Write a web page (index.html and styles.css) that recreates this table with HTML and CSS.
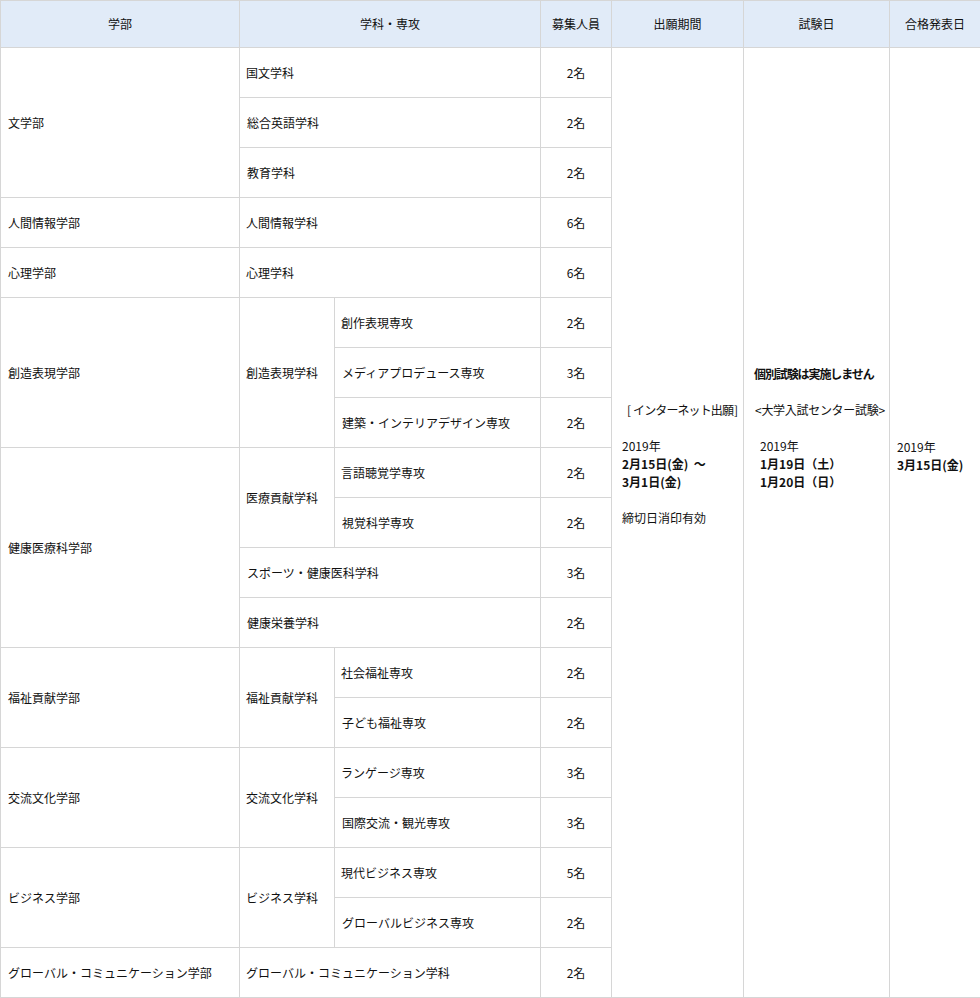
FILE: index.html
```html
<!DOCTYPE html>
<html lang="ja">
<head>
<meta charset="utf-8">
<link rel="stylesheet" href="styles.css">
</head>
<body>
<table class="tbl">
<colgroup>
<col class="c1"><col class="c2a"><col class="c2b"><col class="c3"><col class="c4"><col class="c5"><col class="c6">
</colgroup>
<thead>
<tr class="hr">
<th>学部</th>
<th colspan="2">学科・専攻</th>
<th>募集人員</th>
<th>出願期間</th>
<th>試験日</th>
<th>合格発表日</th>
</tr>
</thead>
<tbody>
<tr>
<td rowspan="3">文学部</td>
<td colspan="2">国文学科</td>
<td class="num">2名</td>
<td rowspan="19" class="span col4"><span class="brk">[<span class="gap">インターネット出願</span>]</span><br><br>2019年<br><b>2月15日(金)&nbsp;&nbsp;～<br>3月1日(金)</b><br><br>締切日消印有効</td>
<td rowspan="19" class="span col5"><b class="tight">個別試験は実施しません</b><br><br><span class="ang">&lt;大学入試センター試験&gt;</span><br><br><span class="ind">2019年<br><b>1月19日（土）<br>1月20日（日）</b></span></td>
<td rowspan="19" class="span col6">2019年<br><b>3月15日(金)</b></td>
</tr>
<tr><td colspan="2">総合英語学科</td><td class="num">2名</td></tr>
<tr><td colspan="2">教育学科</td><td class="num">2名</td></tr>
<tr><td>人間情報学部</td><td colspan="2">人間情報学科</td><td class="num">6名</td></tr>
<tr><td>心理学部</td><td colspan="2">心理学科</td><td class="num">6名</td></tr>
<tr><td rowspan="3">創造表現学部</td><td rowspan="3">創造表現学科</td><td>創作表現専攻</td><td class="num">2名</td></tr>
<tr><td>メディアプロデュース専攻</td><td class="num">3名</td></tr>
<tr><td>建築・インテリアデザイン専攻</td><td class="num">2名</td></tr>
<tr><td rowspan="4">健康医療科学部</td><td rowspan="2">医療貢献学科</td><td>言語聴覚学専攻</td><td class="num">2名</td></tr>
<tr><td>視覚科学専攻</td><td class="num">2名</td></tr>
<tr><td colspan="2">スポーツ・健康医科学科</td><td class="num">3名</td></tr>
<tr><td colspan="2">健康栄養学科</td><td class="num">2名</td></tr>
<tr><td rowspan="2">福祉貢献学部</td><td rowspan="2">福祉貢献学科</td><td>社会福祉専攻</td><td class="num">2名</td></tr>
<tr><td>子ども福祉専攻</td><td class="num">2名</td></tr>
<tr><td rowspan="2">交流文化学部</td><td rowspan="2">交流文化学科</td><td>ランゲージ専攻</td><td class="num">3名</td></tr>
<tr><td>国際交流・観光専攻</td><td class="num">3名</td></tr>
<tr><td rowspan="2">ビジネス学部</td><td rowspan="2">ビジネス学科</td><td>現代ビジネス専攻</td><td class="num">5名</td></tr>
<tr><td>グローバルビジネス専攻</td><td class="num">2名</td></tr>
<tr><td>グローバル・コミュニケーション学部</td><td colspan="2">グローバル・コミュニケーション学科</td><td class="num">2名</td></tr>
</tbody>
</table>
</body>
</html>
```
FILE: styles.css
```css
html, body {
  margin: 0;
  padding: 0;
  background: #fff;
}
body {
  font-family: "Noto Sans CJK JP", "Noto Sans", sans-serif;
  font-size: 12px;
  color: #111;
}
.tbl {
  border-collapse: collapse;
  table-layout: fixed;
  width: 980px;
}
.c1 { width: 239px; }
.c2a { width: 95px; }
.c2b { width: 206px; }
.c3 { width: 71px; }
.c4 { width: 132px; }
.c5 { width: 146px; }
.c6 { width: 91px; }
.tbl th, .tbl td {
  border: 1px solid #d6d6d6;
  padding: 0 6px;
  line-height: 18px;
  font-weight: normal;
  white-space: nowrap;
}
.tbl th {
  background: #e1ebf8;
  height: 46px;
  text-align: center;
}
.tbl td {
  height: 49px;
  text-align: left;
  vertical-align: middle;
}
.tbl td:first-child { padding-left: 7px; }
.tbl td.num { text-align: center; }
.tbl td.span {
  vertical-align: top;
  height: auto;
}
.tbl td.col4 { padding: 353px 4px 0 10px; }
.tbl td.col5 { padding: 317px 4px 0 10px; }
.tbl td.col6 { padding: 390px 4px 0 7px; }
.brk { display: inline-block; margin-left: 5px; }
.gap { display: inline-block; margin: 0 1px 0 2px; letter-spacing: -0.9px; }
.tight { letter-spacing: -1.1px; }
.ang { display: inline-block; margin-left: 1px; letter-spacing: -0.3px; }
.ind { display: inline-block; margin-left: 6px; }
b { font-weight: bold; }
```
